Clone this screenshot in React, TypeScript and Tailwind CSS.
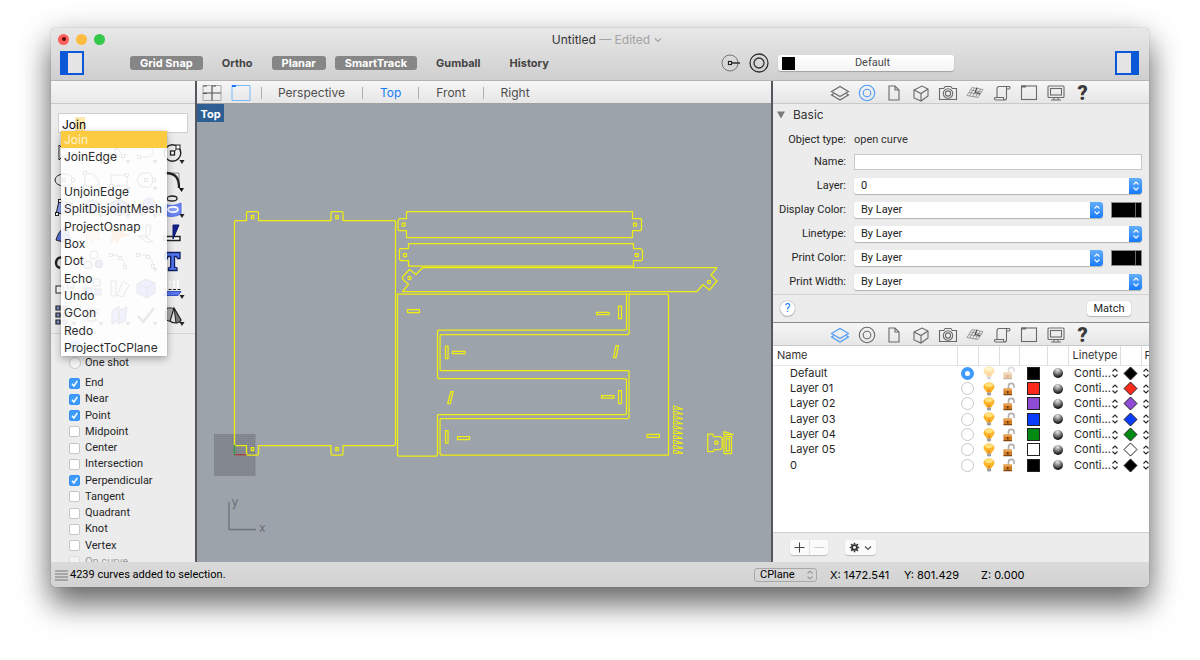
import React, { useState } from 'react';

const snapModes: { label: string; on: boolean }[] = [
  { label: 'Grid Snap', on: true },
  { label: 'Ortho', on: false },
  { label: 'Planar', on: true },
  { label: 'SmartTrack', on: true },
  { label: 'Gumball', on: false },
  { label: 'History', on: false },
];

const suggestions = ['Join', 'JoinEdge', '', 'UnjoinEdge', 'SplitDisjointMesh', 'ProjectOsnap', 'Box', 'Dot', 'Echo', 'Undo', 'GCon', 'Redo', 'ProjectToCPlane'];

const osnaps: [string, boolean][] = [
  ['End', true], ['Near', true], ['Point', true], ['Midpoint', false], ['Center', false], ['Intersection', false],
  ['Perpendicular', true], ['Tangent', false], ['Quadrant', false], ['Knot', false], ['Vertex', false],
];

const layers: { name: string; color: string; current?: boolean }[] = [
  { name: 'Default', color: '#000000', current: true },
  { name: 'Layer 01', color: '#ff2a1c' },
  { name: 'Layer 02', color: '#8f4bd6' },
  { name: 'Layer 03', color: '#0a3cff' },
  { name: 'Layer 04', color: '#008a12' },
  { name: 'Layer 05', color: '#ffffff' },
  { name: '0', color: '#000000' },
];

/* ---------- tool palette ---------- */

const Pt = ({ x, y }: { x: number; y: number }) => (
  <rect x={x - 1.5} y={y - 1.5} width="3" height="3" fill="#fff" stroke="#111" strokeWidth="0.9" />
);
const More = () => <path d="M18.5 19h5l-2.5 4z" fill="#222" stroke="none" />;

const tools: { name: string; art: React.ReactNode }[] = [
  { name: 'Select', art: <path d="M6 4v15l4-4 3 6 2-1-3-6h5z" fill="#fff" /> },
  { name: 'Point', art: <><Pt x={12} y={12} /><More /></> },
  { name: 'Polyline', art: <><path d="M5 19 9 6l7 9 4-2" /><Pt x={9} y={6} /><Pt x={16} y={15} /><More /></> },
  { name: 'Curve', art: <><path d="M4 5h9c8 0 8 11 0 11H5" /><Pt x={5} y={5} /><Pt x={5} y={16} /><More /></> },
  { name: 'Circle', art: <><circle cx="11.500" cy="12" r="8.300" strokeWidth="1.400" /><path d="M12 12 17 6" /><rect x="9.500" y="10" width="4" height="4" fill="#fff" strokeWidth="1.300" /><rect x="15" y="4" width="4" height="4" fill="#fff" strokeWidth="1" /><More /></> },
  { name: 'Ellipse', art: <><ellipse cx="11" cy="12" rx="9" ry="6" /><Pt x={11} y={12} /><Pt x={20} y={12} /><More /></> },
  { name: 'Arc', art: <><path d="M5 5c8 0 14 4 14 12M5 5v14l14-2" /><Pt x={5} y={5} /><Pt x={5} y={19} /><More /></> },
  { name: 'Rectangle', art: <><path d="M4 7h16v11H4z" /><Pt x={20} y={7} /><Pt x={4} y={18} /><More /></> },
  { name: 'Polygon', art: <><path d="M7 5h9l4 7-4 7H7l-4-7z" /><Pt x={12} y={12} /><Pt x={20} y={12} /><More /></> },
  { name: 'Fillet', art: <><path d="M4 5h14v14" strokeWidth="0.800" stroke="#777" /><path d="M4 5c10 0 14 4 14 15" strokeWidth="2.300" /><path d="M18 20h5l-2.500 4z" fill="#111" stroke="none" /></> },
  { name: 'Surface', art: <><path d="M6 6 3 19l14-2 2-9z" fill="#8ca0f0" /><Pt x={7} y={6} /><Pt x={4} y={19} /></> },
  { name: 'Sphere', art: <><circle cx="12" cy="12" r="7" fill="#6f87f5" /><More /></> },
  { name: 'Box', art: <><path d="m4 8 8-4 8 4v9l-8 4-8-4z" fill="#5a75ee" /><path d="m4 8 8 4 8-4M12 12v9" /><More /></> },
  { name: 'Boolean', art: <><circle cx="9" cy="14" r="6" fill="#b9c4f8" /><circle cx="15" cy="9" r="6" fill="#5a75ee" /><More /></> },
  { name: 'Surface from curve', art: <><ellipse cx="11" cy="3.500" rx="5" ry="2.500" strokeWidth="1.300" /><path d="M3 9c5 2 11 2 17-1v11c-6 3-12 3-17 1z" fill="#6b86f3" stroke="#5371e5" /><ellipse cx="12" cy="14.500" rx="5" ry="2.600" fill="#8ca0f7" stroke="#fff" strokeWidth="1.600" /><More /></> },
  { name: 'Mesh', art: <path d="M3 18c2-7 5-11 10-13l5 12-8 3z" fill="#5b74dd" /> },
  { name: 'Gears', art: <path d="m12 3 2 4 4-2-1 5 4 1-3 3 2 4-5-1-2 4-3-4-4 2 1-5-4-2 4-2-1-5 4 2z" fill="#f6b88c" stroke="#d18450" /> },
  { name: 'Explode', art: <path d="m3 21 3-9-4-7 8 4 7-6-1 8 6 2-9 2-3 6-2-4z" fill="#f08a2c" stroke="#d16c10" /> },
  { name: 'Trim', art: <path d="M4 14h7l8 6h-7zM12 3h5l-1 9-4 4z" fill="#dde3ff" /> },
  { name: 'Split', art: <><path d="M3 14.500h16v4H3z" fill="#fff" strokeWidth="1.400" /><path d="M12 3h6l-6 14z" fill="#14248f" stroke="#0b1668" /></> },
  { name: 'Join', art: <path d="M7 19c-7-2-4-13 3-10" strokeWidth="2.500" /> },
  { name: 'Group', art: <><circle cx="8" cy="16" r="4" fill="#c5cdf9" /><circle cx="14" cy="6" r="4" fill="#fff" /><circle cx="19" cy="15" r="4" fill="#354fc4" /></> },
  { name: 'Edit points', art: <><path d="M4 6c8-1 14 4 14 12" /><Pt x={4} y={6} /><Pt x={13} y={9} /><Pt x={18} y={18} /></> },
  { name: 'Rebuild', art: <><path d="M3 6h9c5 2 7 6 7 12" /><Pt x={4} y={6} /><Pt x={14} y={8} /><Pt x={19} y={17} /><More /></> },
  { name: 'Text', art: <path d="M4 3.500h15v6h-2.500L15.500 7.500h-2V18l2.500 1v2.500H7.500V19l2.200-1V7.500H7l-1 2.500H3.500z" fill="#5478f0" stroke="#122066" strokeWidth="1.300" /> },
  { name: 'Move', art: <><rect x="3" y="10" width="7" height="7" fill="#fff" /><rect x="14" y="5" width="7" height="7" fill="#b9c4f8" /></> },
  { name: 'Copy', art: <><rect x="4" y="12" width="8" height="7" fill="#6b86f3" /><rect x="13" y="3" width="7" height="7" fill="#c5cdf9" /><rect x="15" y="13" width="6" height="6" fill="#6b86f3" /></> },
  { name: 'Rotate', art: <path d="M4 5h5v15H4zM10 19l6-14 6 4-6 12z" fill="#dde3ff" /> },
  { name: 'Solid', art: <><path d="m3 8 9-5 9 4v10l-8 5-10-5z" fill="#5a75ee" /><path d="m3 8 10 4 8-5M13 12v10" /></> },
  { name: 'Extrude', art: <><path d="M5 12V5m4 7V5m4 7V5m4 7V5" stroke="#fff" strokeWidth="1.400" /><path d="m3.500 6.500 1.500-3 1.500 3zm4 0 1.500-3 1.500 3zm4 0 1.500-3 1.500 3zm4 0 1.500-3 1.500 3z" fill="#fff" stroke="none" /><path d="M5 15.500h15l-3 4H2z" fill="#5875ed" stroke="#3753c9" /><path d="M3 13.500h17" strokeDasharray="3 1.500" /><More /></> },
  { name: 'Array', art: <><path d="M3 3h4v4H3zm0 7h4v4H3zm0 7h4v4H3zM10 3h4v4h-4zm0 7h4v4h-4zm0 7h4v4h-4z" fill="#8190cf" strokeWidth="1.200" /><More /></> },
  { name: 'Align', art: <><path d="M12 3v18" stroke="#d33" /><path d="M6 6h12v4H6zM8 14h8v4H8z" fill="#fff" /><More /></> },
  { name: 'Layers', art: <><path d="m5 8 7-5v14l-7 4zM13 7l7-3-2 14-7 3z" fill="#6d88f4" /><More /></> },
  { name: 'Check', art: <><path d="m4 13 5 6L20 5" strokeWidth="2.500" /><More /></> },
  { name: 'Render solids', art: <><path d="M4 7c0-2 6-3 9-1v12c-3 1-7 0-9-2z" fill="#aaa" /><path d="M5 8v8" stroke="#333" strokeWidth="2" /><path d="m13 5 7 12c-1 3-8 4-11 1z" fill="#e4e4e4" strokeWidth="1.200" /><path d="m13 5 7 12c-1 2-3 3-5 3z" fill="#777" /><More /></> },
];

/* ---------- inspector icons ---------- */

const inspectorIcons: { name: string; art?: React.ReactNode }[] = [
  { name: 'Layers', art: <><path d="m1.500 8.500 8.500-5 8.500 5-8.500 5z" /><path d="m4 10.500-2.500 1.500 8.500 5 8.500-5-2.500-1.500" /></> },
  { name: 'Properties', art: <><circle cx="10" cy="10" r="7.700" /><circle cx="10" cy="10" r="3.800" /></> },
  { name: 'Page', art: <><path d="M5 3h6l4 4v10H5z" /><path d="M11 3v4h4" /></> },
  { name: 'Object', art: <><path d="m3 7 8-4 6 3v7l-7 5-7-3z" /><path d="m3 7 7 3.500L17 6M10 10.500V18" /></> },
  { name: 'Camera', art: <><path d="M1.500 5.500h4.200l1.500-2h5.600l1.500 2h4.200v11h-17z" /><circle cx="10" cy="10.500" r="4.700" /><circle cx="10" cy="10.500" r="2.600" /></> },
  { name: 'CPlane', art: <><path d="m7 4.500 11 2-5 8-11-2zM5.500 7l11 2M4 9.500l11 2M9.500 5l-5 8M12.500 5.500l-5 8M15.500 6l-5 8" strokeWidth="0.600" /><path d="m12 4.500-2 5 5 1" stroke="#444" strokeWidth="1" /></> },
  { name: 'Script', art: <path d="M5 14.500V6c0-1.500.5-2.500 2-2.500h10c1.500 0 1 2.500 0 2.500h-2.500v9c0 1.700-1 2-2 2H4c-2 0-2-2.500-.5-2.500h8c0 1.500 0 2.500 1 2.500M14.500 6V3.500" /> },
  { name: 'Viewport', art: <><rect x="2.500" y="3" width="15" height="13.500" /><path d="M2.500 3.500H7" strokeWidth="2" /></> },
  { name: 'Display', art: <><rect x="2" y="3" width="16" height="11.500" rx="1" /><rect x="4.500" y="5.500" width="11" height="6.500" /><path d="M8 14.500v2m4-2v2M5 17h10" /></> },
  { name: 'Help' },
];

function InspectorTabs({ active }: { active: string }) {
  return (
    <nav className="flex h-[23px] shrink-0 items-center justify-center border-b border-[#c9c9c9] bg-linear-to-b from-[#f6f6f6] to-[#e6e6e6] pt-[2px]">
      {inspectorIcons.map((i) => (
        <button key={i.name} aria-label={i.name} className={i.name === active ? 'flex w-[27px] justify-center text-[#4a9af8]' : 'flex w-[27px] justify-center text-[#6a6a6a]'}>
          {i.art
            ? <svg className="size-5" viewBox="0 0 20 20" fill="none" stroke="currentColor" strokeWidth="1.1">{i.art}</svg>
            : <span className="text-[20px] leading-5 font-black text-[#3a3a3a]">?</span>}
        </button>
      ))}
    </nav>
  );
}

const UpDown = ({ className }: { className: string }) => (
  <svg className={className} viewBox="0 0 8 12" fill="none" stroke="currentColor" strokeWidth="1.1"><path d="M1.500 4.500 4 2l2.500 2.500M1.500 7.500 4 10l2.500-2.500" /></svg>
);

function PopUp({ id, value }: { id: string; value: string }) {
  return (
    <div className="relative h-4 flex-1 rounded-[3px] bg-white shadow-[0_1px_1px_rgba(0,0,0,0.25)]">
      <select id={id} className="block h-4 w-full appearance-none rounded-[3px] bg-transparent pl-[7px] leading-4 text-[#222]">
        <option>{value}</option>
      </select>
      <span className="pointer-events-none absolute inset-y-0 right-0 flex w-[13px] items-center justify-center rounded-r-[3px] bg-linear-to-b from-[#62aefa] to-[#137bfb] text-white">
        <UpDown className="h-3 w-2" />
      </span>
    </div>
  );
}

const Well = ({ label }: { label: string }) => (
  <button aria-label={label} className="ml-2 flex h-4 w-[31px] border border-[#8a8a8a] bg-black">
    <span className="mr-[5px] ml-auto h-full w-px bg-[#666]" />
  </button>
);

function Field({ id, label, value, well }: { id: string; label: string; value: string; well?: boolean }) {
  return (
    <>
      <label htmlFor={id} className="text-right whitespace-nowrap">{label}</label>
      <div className="flex"><PopUp id={id} value={value} />{well && <Well label={label + ' swatch'} />}</div>
    </>
  );
}

/* ---------- viewport ---------- */

const teeth = [405.8, 410.7, 415.6, 420.5, 425.4, 430.3, 435.2, 440.1, 445, 449.9];

function Viewport() {
  return (
    <svg className="absolute inset-0 size-full" viewBox="197 104 574 458" fill="none" preserveAspectRatio="xMinYMin meet">
      <defs>
        <pattern id="grid" x="214" y="434" width="2" height="2" patternUnits="userSpaceOnUse">
          <path d="M0 .5h2M.5 0v2" stroke="#7b8087" strokeWidth="0.500" />
        </pattern>
      </defs>
      <rect x="214" y="434" width="41.500" height="42" fill="#888d94" />
      <rect x="214" y="434" width="41.500" height="42" fill="url(#grid)" />
      <g stroke="#f0ee10" strokeWidth="1.250" strokeLinejoin="round">
        <path d="M235.500 220.500h11v-8l1-1h10l1 1v8h72.500v-8l1-1h10l1 1v8h51.500l1 1v223l-1 1h-51.500v8.500l-1 1h-10l-1-1v-8.500h-72.500v8.500l-1 1h-10l-1-1v-8.500h-12v-224z" />
        <path d="M406.500 211.500h226v7h8l1 1v10l-1 1h-8v7h-226v-7h-7.500l-1-1v-9l1.500-2h7z" />
        <path d="M408.500 243.500h225v5h7l2 2v9l-1 1h-8v5.500h-225v-5.500h-8l-1-1v-10l1-1h8z" />
        <path d="M422.500 267.700H717L711 275l6 6-7.500 9-6.500-5.500-6 7H402.500l6-7-6-5.500v-2l7-7.500 6.500 5z" />
        <path d="M397.500 294H626.500V329l-1 1H438.500l-1 1v46.500l1 1H625.500l1 1v34l-1 1H438.500l-1 1v39.500l-1 1h-38l-1-1z" />
        <path d="M630 294h37.500l1 1v160H441l-1-1v-34.500l1-1h187l1-1v-46l-1-1H441l-1-1v-34l1-1h187l1-1v-38z" />
        <path d="M626.500 294H630" />
        <path d="M407.500 309.500h12v3h-12zM445.500 346h2.500v12.500h-2.500zM452.500 351.300h12.500v2.400h-12.500zM451 391.500h2.200l-3 12h-2.500zM445.500 430.500h2.500v12.500h-2.500zM457.500 436.500h12v3h-12z" />
        <path d="M596.500 312.300h12.500v2.400h-12.500zM618.500 306h3v12.500h-3zM616 345.500h2.500l-2.500 12h-2.500zM601.500 395.700h12.500v2.400h-12.500zM618.500 390.500h3v13h-3zM647 434.300h12.500v3h-12.500z" />
        <path d="M251.300 215.500h2.400v3.200h-2.400zM335.800 215.500h2.400v3.200h-2.400zM251.300 447.500h2.400v3.200h-2.400zM335.800 447.500h2.400v3.200h-2.400zM402 223h3v3h-3zM633.500 223h3v3h-3zM403.500 253.500h3v3h-3zM635.300 253.500h3v3h-3z" />
        <circle cx="409.500" cy="278" r="1.600" />
        <circle cx="709" cy="282" r="1.600" />
        {teeth.map((y) => <path key={y} strokeWidth="1" d={`M673.500 ${y}v3.300h9.500l-9.500-3.300m4.500 1.500 1 1.800`} />)}
        <path d="M707.700 434h5l1 2.500h6.500l2 2v9l-2 2h-6l-1 2h-5.500zM715 441.200h2.800v2.800H715zM724 436.500h7.500v17H724zM726.300 438.500h3v12.500h-3zM723.700 431.500v3h9.500l-9.500-2.800M724 434.500h5" />
      </g>
      <path d="M234.500 445v10" stroke="#2f9a3b" strokeWidth="1.300" />
      <path d="M234.500 454.700h12" stroke="#a8403c" strokeWidth="1.300" />
      <path d="M229 502v27.500h27" stroke="#70757b" strokeWidth="1.400" />
      <g className="text-[12px]" fill="#6a6f76"><text x="231.500" y="506">y</text><text x="259" y="532">x</text></g>
    </svg>
  );
}

const SidebarGlyph = ({ right }: { right?: boolean }) => (
  <button aria-label={right ? 'Toggle right sidebar' : 'Toggle left sidebar'} className={right ? 'flex h-6 w-6 justify-end border border-[#0a57d8] bg-[#e4e4e4] ring-1 ring-[#0a57d8] ring-inset' : 'flex h-6 w-6 border border-[#0a57d8] bg-[#e4e4e4] ring-1 ring-[#0a57d8] ring-inset'}>
    <span className="h-full w-[7px] bg-[#0a57d8]" />
  </button>
);

const Bulb = ({ dim }: { dim?: boolean }) => (
  <svg className={dim ? 'mx-auto h-[14px] w-3 opacity-40' : 'mx-auto h-[14px] w-3'} viewBox="0 0 12 14">
    <path d="M6 .5C9 .5 11.500 2.300 11.500 5c0 2.500-2.500 3-3 5.500h-5C3 8 .5 7.500.5 5 .5 2.300 3 .5 6 .5z" fill="#fbb62c" />
    <ellipse cx="6" cy="3" rx="4" ry="2" fill="#ffe27a" />
    <path d="M4.500 7.500h3l-.6 3H5z" fill="#f58a17" />
    <path d="M4 10.500h4v2L7 13.500H5l-1-1z" fill="#9c9c9c" />
  </svg>
);

const Lock = ({ dim }: { dim?: boolean }) => (
  <svg className={dim ? 'mx-auto h-[14px] w-3 opacity-40' : 'mx-auto h-[14px] w-3'} viewBox="0 0 12 14">
    <path d="M5.500 6.500V4c0-3.500 5.500-3.500 5.500 0v2" fill="none" stroke="#b0b0b0" strokeWidth="1.600" />
    <rect x="0.500" y="6.500" width="8.500" height="6.500" rx="0.500" fill="#cf7a25" />
    <rect x="0.500" y="6.500" width="8.500" height="2" fill="#e9a75a" />
    <path d="M4 9h1.500v2.500H4zM.5 12.300H9v1H.5z" fill="#6e3907" />
  </svg>
);

export default function App() {
  const [command, setCommand] = useState('Join');
  return (
    <div className="h-screen overflow-hidden bg-white px-[51px] pt-7 pb-[73px] font-['Roboto','Liberation_Sans',sans-serif] text-[11px] leading-4 text-[#262626]">
      <main className="flex h-full flex-col overflow-hidden rounded-[5px] bg-[#ececec] shadow-[0_0_1px_rgba(0,0,0,0.5),0_18px_30px_rgba(0,0,0,0.52),0_4px_32px_rgba(0,0,0,0.18)]">
        <header className="h-[53px] shrink-0 border-b border-[#b4b4b4] bg-linear-to-b from-[#e8e8e8] to-[#cfcfcf] font-['Inter','Liberation_Sans',sans-serif]">
          <div className="flex h-[22px] items-center">
            <div className="flex w-20 gap-[7px] pl-[7px]">
              <button aria-label="Close" className="flex size-[11px] items-center justify-center rounded-full bg-[#fc605b]"><span className="size-1 rounded-full bg-[#5c0a08]" /></button>
              <button aria-label="Minimize" className="size-[11px] rounded-full bg-[#fdbc40]" />
              <button aria-label="Zoom" className="size-[11px] rounded-full bg-[#34c84a]" />
            </div>
            <h1 className="flex flex-1 items-center justify-center pt-px pr-[66px] text-[12px] text-[#333]">
              Untitled&nbsp;<span className="text-[#a3a3a3]">— Edited</span>
              <svg className="ml-1 h-2 w-2" viewBox="0 0 8 8" fill="none" stroke="#a3a3a3" strokeWidth="1.200"><path d="m1 2.500 3 3 3-3" /></svg>
            </h1>
          </div>
          <div className="flex h-[26px] items-center pr-[10px] pl-[9px]">
            <SidebarGlyph />
            <div className="ml-[46px] flex gap-[9px]">
              {snapModes.map((m) => (
                <button key={m.label} className={m.on ? 'h-[14px] rounded-[3px] bg-[#868686] px-[10px] text-[11px] leading-[14px] font-bold text-white' : 'h-[14px] rounded-[3px] px-[10px] text-[11px] leading-[14px] font-bold text-[#444]'}>{m.label}</button>
              ))}
            </div>
            <div className="ml-auto flex items-center">
              <svg className="mr-2 h-5 w-5" viewBox="0 0 20 20" fill="none" stroke="#777"><circle cx="9" cy="10" r="8" /><path d="M9 10h10" stroke="#333" strokeWidth="1.300" /><rect x="7.500" y="8.500" width="3" height="3" fill="#fff" stroke="#222" strokeWidth="1.200" /></svg>
              <svg className="mr-[9px] h-5 w-5" viewBox="0 0 20 20" fill="none" stroke="#333" strokeWidth="1.300"><circle cx="10" cy="10" r="9" /><circle cx="10" cy="10" r="5" /></svg>
              <button className="flex h-4 w-44 items-center rounded-[3px] bg-linear-to-b from-white to-[#f4f4f4] px-1 font-['Roboto','Liberation_Sans',sans-serif] shadow-[0_1px_1px_rgba(0,0,0,0.25)]">
                <span className="size-[13px] bg-black" />
                <span className="flex-1 text-[#4a4a4a]">Default</span>
              </button>
              <div className="ml-[161px] flex"><SidebarGlyph right /></div>
            </div>
          </div>
        </header>

        <div className="flex min-h-0 flex-1">
          <aside className="flex w-36 shrink-0 flex-col overflow-hidden">
            <div className="h-[23px] shrink-0 border-b border-[#c9c9c9] bg-linear-to-b from-[#f6f6f6] to-[#e9e9e9]" />
            <div className="relative mt-[9px] px-[7px] font-['Inter','Liberation_Sans',sans-serif]">
              <div className="relative h-5 border border-[#cfcfcf] bg-white">
                <span className="pointer-events-none absolute top-[3px] left-4 h-[15px] w-[10px] bg-[#ffe9ab]" />
                <input aria-label="Command" value={command} onChange={(e) => setCommand(e.target.value)} className="relative block h-full w-full bg-transparent pt-[2px] pl-[3px] text-[12px] text-black outline-none" />
              </div>
              <ul className="absolute top-[18px] left-[10px] z-10 flex h-[225px] w-[106px] flex-col bg-white/90 text-[12px] text-[#2e2e2e] shadow-[0_3px_8px_rgba(0,0,0,0.3),0_0_1px_rgba(0,0,0,0.3)]">
                {suggestions.map((s, i) => (
                  <li key={i} className={i === 0 ? 'flex flex-1 items-center bg-[#fdcb40] pt-px pl-[3px] text-[#fdf3d0]' : 'flex flex-1 items-center pt-px pl-[3px] whitespace-nowrap'}>{s}</li>
                ))}
              </ul>
            </div>
            <div className="mt-[8px] grid shrink-0 grid-cols-5 gap-y-[3px] pr-[9px] pb-[6px]">
              {tools.map((t) => (
                <button key={t.name} aria-label={t.name} className="flex justify-center">
                  <svg className="size-6" viewBox="0 0 24 24" fill="none" stroke="#222" strokeWidth="1">{t.art}</svg>
                </button>
              ))}
            </div>
            <div className="border-t border-[#d4d4d4] pt-[3px] pl-[18px]">
              <div className="flex h-[17px] items-center">
                <input type="radio" name="osnap" aria-label="Persistent" defaultChecked className="size-3 appearance-none rounded-full bg-[#3f9bfb]" />
              </div>
              <label className="flex h-[17px] items-center gap-1">
                <input type="radio" name="osnap" className="size-3 appearance-none rounded-full border border-[#c8c8c8] bg-[#f6f6f6]" />One shot
              </label>
              <div className="mt-1 flex h-[195px] flex-col">
                {[...osnaps, ['On curve', false] as [string, boolean]].map(([label, on]) => (
                  <label key={label} className={label === 'On curve' ? 'flex flex-1 items-center gap-[5px] opacity-40' : 'flex flex-1 items-center gap-[5px]'}>
                    <span className="relative flex">
                      <input type="checkbox" defaultChecked={on} className="peer size-[11px] appearance-none rounded-[2px] border border-[#c6c6c6] bg-white checked:border-[#3391f8] checked:bg-[#3f9bfb]" />
                      <svg className="pointer-events-none absolute inset-0 hidden size-[11px] peer-checked:block" viewBox="0 0 11 11" fill="none" stroke="#fff" strokeWidth="1.400"><path d="m3 5.800 1.900 2.200L8.300 3" /></svg>
                    </span>
                    {label}
                  </label>
                ))}
              </div>
            </div>
          </aside>

          <section className="flex min-w-0 flex-1 flex-col border-x-2 border-[#54575b] font-['Inter','Liberation_Sans',sans-serif]">
            <nav className="flex h-[23px] shrink-0 items-center border-b border-[#a0a0a0] bg-linear-to-b from-[#f6f6f6] to-[#e6e6e6] pt-px pl-[5px] text-[12px] text-[#4e4e4e]">
              <button aria-label="Four viewports"><svg className="block h-[18px] w-5" viewBox="0 0 20 18" fill="none"><path d="M1 1.500h18v15H1z" stroke="#aaa" /><path d="M1 9h18M10 1.500v15M1 2h4M10 2h4M1 9.500h4" stroke="#555" strokeWidth="1.200" /></svg></button>
              <button aria-label="Single viewport" className="ml-[9px]"><svg className="block h-[18px] w-5" viewBox="0 0 20 18" fill="none"><path d="M1 1.500h18v15H1z" stroke="#7ab8ff" /><path d="M1 2h4" stroke="#1a7cf5" strokeWidth="1.800" /></svg></button>
              <span className="ml-[10px] h-3 w-px bg-[#b0b0b0]" />
              <button className="ml-4">Perspective</button>
              <span className="mx-[17px] h-3 w-px bg-[#b0b0b0]" />
              <button className="text-[#157efb]">Top</button>
              <span className="mx-[17px] h-3 w-px bg-[#b0b0b0]" />
              <button>Front</button>
              <span className="mx-[17px] h-3 w-px bg-[#b0b0b0]" />
              <button>Right</button>
            </nav>
            <div className="relative flex-1 bg-[#9ca3ab]">
              <Viewport />
              <span className="relative block h-[18px] w-[27px] bg-[#2f5f92] pt-[2px] text-center font-bold text-white">Top</span>
            </div>
          </section>

          <aside className="flex w-94 shrink-0 flex-col">
            <InspectorTabs active="Properties" />
            <h2 className="flex h-[22px] items-center gap-2 pl-1 font-['Inter','Liberation_Sans',sans-serif] text-[12px] text-[#333]">
              <svg className="size-2" viewBox="0 0 8 8" fill="#7a7a7a"><path d="M0 .5h8L4 7.500z" /></svg>Basic
            </h2>
            <div className="grid grid-cols-[73px_1fr] gap-x-2 gap-y-2 pt-[6px] pr-[7px]">
              <span className="text-right">Object type:</span><span className="text-[#333]">open curve</span>
              <label htmlFor="name" className="-mt-[2px] text-right">Name:</label>
              <input id="name" className="-mt-[2px] h-4 min-w-0 border border-[#c8c8c8] bg-white px-1" />
              <Field id="layer" label="Layer:" value="0" />
              <Field id="display-color" label="Display Color:" value="By Layer" well />
              <Field id="linetype" label="Linetype:" value="By Layer" />
              <Field id="print-color" label="Print Color:" value="By Layer" well />
              <Field id="print-width" label="Print Width:" value="By Layer" />
            </div>
            <div className="mt-1 flex h-[29px] shrink-0 items-center justify-between border-t border-b border-t-[#d2d2d2] border-b-[#8c8c8c] pr-[18px] pl-[7px]">
              <button aria-label="Help" className="size-[15px] rounded-full bg-white text-[12px] leading-[15px] text-[#157efb] shadow-[0_0_1px_rgba(0,0,0,0.5),0_1px_1px_rgba(0,0,0,0.2)]">?</button>
              <button className="h-[15px] w-11 rounded-[3px] bg-white leading-[15px] shadow-[0_0_1px_rgba(0,0,0,0.3),0_1px_1px_rgba(0,0,0,0.2)]">Match</button>
            </div>
            <InspectorTabs active="Layers" />
            <div className="min-h-0 flex-1 overflow-hidden bg-white font-['Inter','Liberation_Sans',sans-serif]">
              <table className="h-[127px] w-full table-fixed border-collapse">
                <colgroup>
                  <col /><col className="w-[21px]" /><col className="w-[21px]" /><col className="w-5" /><col className="w-7" /><col className="w-[21px]" /><col className="w-[52px]" /><col className="w-[21px]" /><col className="w-2" />
                </colgroup>
                <thead>
                  <tr className="h-[19px] border-b border-[#e6e6e6] text-left text-[#333]">
                    <th className="border-r border-[#dedede] p-0 pl-1 font-normal">Name</th>
                    {['Current', 'On', 'Locked', 'Color', 'Material'].map((c) => <th key={c} aria-label={c} className="border-r border-[#dedede] p-0" />)}
                    <th className="border-r border-[#dedede] p-0 pl-1 font-normal">Linetype</th>
                    <th aria-label="Print color" className="border-r border-[#dedede] p-0" />
                    <th className="overflow-hidden p-0 pl-[3px] font-normal">P</th>
                  </tr>
                </thead>
                <tbody>
                  {layers.map((l) => (
                    <tr key={l.name} className="leading-[15px]">
                      <td className="p-0 pl-[17px]">{l.name}</td>
                      <td className="p-0">
                        <input type="radio" name="current-layer" aria-label={'Make ' + l.name + ' current'} defaultChecked={l.current} className="mx-auto block size-[13px] appearance-none rounded-full border border-[#c8c8c8] bg-white checked:border-[4px] checked:border-[#3f9bfb]" />
                      </td>
                      <td className="p-0"><Bulb dim={l.current} /></td>
                      <td className="p-0"><Lock dim={l.current} /></td>
                      <td className="p-0"><svg className="mx-auto block size-[13px]" viewBox="0 0 13 13"><rect x="0.500" y="0.500" width="12" height="12" fill={l.color} stroke="#222" /></svg></td>
                      <td className="p-0"><span className="mx-auto block size-[10px] rounded-full bg-[radial-gradient(circle_at_45%_20%,#e8e8e8,#8a8a8a_35%,#151515_75%)]" /></td>
                      <td className="p-0"><span className="flex items-center justify-between pr-[2px] pl-[6px]">Conti...<UpDown className="h-3 w-2 shrink-0" /></span></td>
                      <td className="p-0"><svg className="mx-auto block size-[15px]" viewBox="0 0 15 15"><path d="m7.500 1 6.500 6.500L7.500 14 1 7.500z" fill={l.color} stroke="#222" /></svg></td>
                      <td className="overflow-hidden p-0"><UpDown className="ml-px h-3 w-2" /></td>
                    </tr>
                  ))}
                </tbody>
              </table>
            </div>
            <div className="flex h-[30px] shrink-0 items-center gap-[17px] border-t border-[#d0d0d0] pl-[17px]">
              <div className="flex h-[15px] rounded-[3px] bg-[#fbfbfb] shadow-[0_1px_1px_rgba(0,0,0,0.2)]">
                <button aria-label="Add layer" className="flex w-5 items-center justify-center border-r border-[#e2e2e2]"><svg className="size-[11px]" viewBox="0 0 11 11" stroke="#444"><path d="M.5 5.500h10M5.500.5v10" /></svg></button>
                <button aria-label="Remove layer" className="flex w-[18px] items-center justify-center"><svg className="size-[11px]" viewBox="0 0 11 11" stroke="#ccc"><path d="M.5 5.500h10" /></svg></button>
              </div>
              <button aria-label="Layer actions" className="flex h-[15px] w-[31px] items-center justify-between rounded-[3px] bg-[#fbfbfb] px-1 shadow-[0_1px_1px_rgba(0,0,0,0.2)]">
                <svg className="size-[11px]" viewBox="0 0 12 12" fill="none" stroke="#333"><circle cx="6" cy="6" r="2.600" strokeWidth="2" /><path d="M6 .8v2M6 9.200v2M.8 6h2M9.200 6h2M2.300 2.300l1.500 1.500M8.200 8.200l1.500 1.500M2.300 9.700l1.500-1.500M8.200 3.800l1.500-1.500" strokeWidth="1.700" /></svg>
                <svg className="size-2" viewBox="0 0 8 8" fill="none" stroke="#555" strokeWidth="1.200"><path d="m1 2.500 3 3 3-3" /></svg>
              </button>
            </div>
          </aside>
        </div>

        <footer className="flex h-[25px] shrink-0 items-center bg-linear-to-b from-[#dadada] to-[#d2d2d2] pt-px pl-1 text-black">
          <svg className="h-[11px] w-[13px]" viewBox="0 0 13 11" stroke="#777"><path d="M0 1h13M0 4h13M0 7h13M0 10h13" /></svg>
          <span className="ml-[2px]">4239 curves added to selection.</span>
          <div className="ml-auto flex w-[395px] items-center font-['Inter','Liberation_Sans',sans-serif]">
            <div className="relative font-['Roboto','Liberation_Sans',sans-serif]">
              <select aria-label="Coordinate system" className="block h-[14px] w-[63px] appearance-none rounded-[3px] border border-[#a8a8a8] bg-transparent pl-[5px] leading-3"><option>CPlane</option></select>
              <UpDown className="pointer-events-none absolute top-px right-[3px] h-3 w-2 text-[#999]" />
            </div>
            <span className="ml-[13px] w-[74px] whitespace-nowrap">X: 1472.541</span>
            <span className="w-[77px] whitespace-nowrap">Y: 801.429</span>
            <span>Z: 0.000</span>
          </div>
        </footer>
      </main>
    </div>
  );
}
